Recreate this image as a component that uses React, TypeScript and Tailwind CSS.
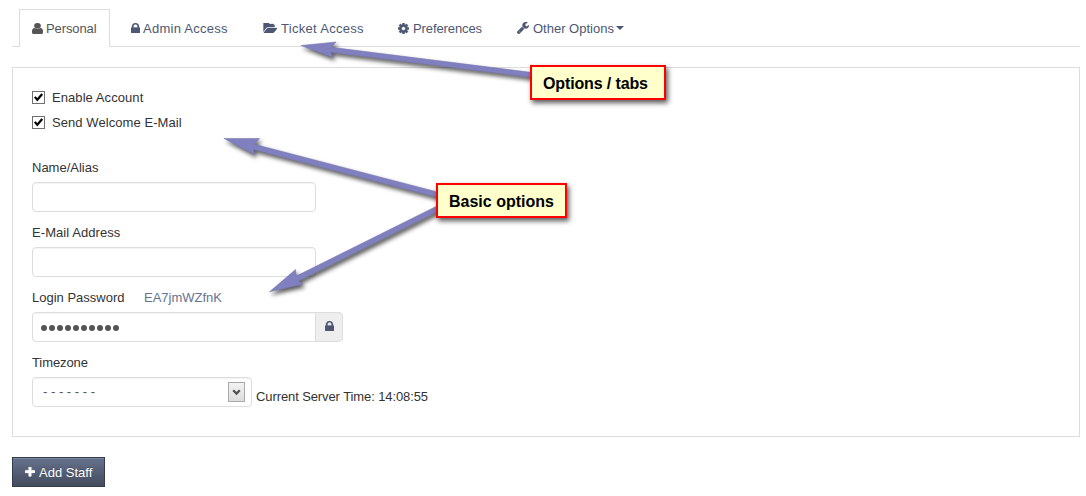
import type { ReactNode } from 'react';

const ICONS = {
  user: 'M1536 1399q0 109-62.5 187t-150.5 78h-854q-88 0-150.5-78t-62.5-187q0-85 8.5-160.5t31.5-152 58.5-131 94-89 134.5-34.5q131 128 313 128t313-128q76 0 134.5 34.5t94 89 58.5 131 31.5 152 8.5 160.5zm-256-887q0 159-112.5 271.5t-271.5 112.5-271.5-112.5-112.5-271.5 112.5-271.5 271.5-112.5 271.5 112.5 112.5 271.5z',
  lock: 'M640 768h512v-192q0-106-75-181t-181-75-181 75-75 181v192zm832 96v576q0 40-28 68t-68 28h-960q-40 0-68-28t-28-68v-576q0-40 28-68t68-28h32v-192q0-184 132-316t316-132 316 132 132 316v192h32q40 0 68 28t28 68z',
  folder: 'M1943 952q0 31-31 66l-336 396q-43 51-120.5 86.5t-143.5 35.5h-1088q-34 0-60.5-13t-26.5-43q0-31 31-66l336-396q43-51 120.5-86.5t143.5-35.5h1088q34 0 60.5 13t26.5 43zm-343-344v160h-832q-94 0-197 47.5t-164 119.5l-337 396-5 6q0-4-.5-12.5t-.5-12.5v-960q0-92 66-158t158-66h320q92 0 158 66t66 158v32h544q92 0 158 66t66 158z',
  cog: 'M1152 896q0-106-75-181t-181-75-181 75-75 181 75 181 181 75 181-75 75-181zm512-109v222q0 12-8 23t-20 13l-185 28q-19 54-39 91 35 50 107 138 10 12 10 25t-9 23q-27 37-99 108t-94 71q-12 0-26-9l-138-108q-44 23-91 38-16 136-29 186-7 28-36 28h-222q-14 0-24.5-8.5t-11.5-21.5l-28-184q-49-16-90-37l-141 107q-10 9-25 9-14 0-25-11-126-114-165-168-7-10-7-23 0-12 8-23 15-21 51-66.5t54-70.5q-27-50-41-99l-183-27q-13-2-21-12.5t-8-23.5v-222q0-12 8-23t19-13l186-28q14-46 39-92-40-57-107-138-10-12-10-24 0-10 9-23 26-36 98.5-107.5t94.5-71.5q13 0 26 10l138 107q44-23 91-38 16-136 29-186 7-28 36-28h222q14 0 24.5 8.5t11.5 21.5l28 184q49 16 90 37l142-107q9-9 24-9 13 0 25 10 129 119 165 170 7 8 7 22 0 12-8 23-15 21-51 66.5t-54 70.5q26 50 41 98l183 28q13 2 21 12.5t8 23.5z',
  wrench: 'M448 1472q0-26-19-45t-45-19-45 19-19 45 19 45 45 19 45-19 19-45zm644-420l-682 682q-37 37-90 37-52 0-91-37l-106-108q-38-36-38-90 0-53 38-91l681-681q39 98 114.5 173.5t173.5 114.5zm634-435q0 39-23 106-47 134-164.5 217.5t-258.5 83.5q-185 0-316.5-131.5t-131.5-316.5 131.5-316.5 316.5-131.5q58 0 121.5 16.5t107.5 46.5q16 11 16 28t-16 28l-293 169v224l193 107q5-3 79-48.5t135.5-81 70.5-35.5q15 0 23.5 10t8.5 25z',
  plus: 'M1600 736v192q0 40-28 68t-68 28h-416v416q0 40-28 68t-68 28h-192q-40 0-68-28t-28-68v-416h-416q-40 0-68-28t-28-68v-192q0-40 28-68t68-28h416v-416q0-40 28-68t68-28h192q40 0 68 28t28 68v416h416q40 0 68 28t28 68z',
};

// Glyph bounds inside each path, so the drawn shape fills its box.
const BOXES: Record<keyof typeof ICONS, string> = {
  user: '256 128 1280 1536',
  lock: '320 128 1152 1408',
  folder: '0 256 1943 1280',
  cog: '128 128 1536 1536',
  wrench: '85 128 1641 1643',
  plus: '192 192 1408 1408',
};

function Icon({ name, className }: { name: keyof typeof ICONS; className: string }) {
  return (
    <svg viewBox={BOXES[name]} fill="currentColor" preserveAspectRatio="none" className={`shrink-0 ${className}`} aria-hidden="true">
      <path d={ICONS[name]} stroke="currentColor" strokeWidth="40" />
    </svg>
  );
}

function Check({ children }: { children: ReactNode }) {
  return (
    <label className="flex h-[25px] items-center gap-[7px] tracking-[0.07px]">
      <span className="flex h-[13px] w-[13px] items-center justify-center border border-[#707070] bg-white">
        <svg viewBox="0 0 11 11" className="h-[11px] w-[11px]">
          <path d="M1.8 4.9 4.3 7.8 9.2 2" fill="none" stroke="#000" strokeWidth="2.2" />
        </svg>
      </span>
      <span>{children}</span>
    </label>
  );
}

function Callout({ className, children }: { className: string; children: ReactNode }) {
  return (
    <div
      className={`absolute flex h-[35px] items-center border-2 border-[#ff0000] bg-[#ffffcc] pt-[2px] pl-[11px] text-[16px] font-bold whitespace-nowrap text-black shadow-[2px_3px_5px_rgba(0,0,0,0.65)] ${className}`}
    >
      {children}
    </div>
  );
}

const inputBox = 'h-[30px] rounded-[4px] border border-[#dddddd] bg-white shadow-[inset_0_1px_1px_rgba(0,0,0,0.05)]';
const labelRow = 'mb-[4px] h-[20px]';
const tab = 'flex h-[35px] items-center pl-[21px]';

export default function App() {
  return (
    <div className="relative h-[496px] w-[1086px] overflow-hidden bg-white pr-[6px] pl-[12px] font-['Liberation_Sans',Arial,sans-serif] text-[13px] leading-[20px] text-[#333333]">
      <nav className="flex h-[47px] items-end border-b border-[#dddddd] pl-[7px] text-[#4c5773]">
        <a className="-mb-px flex h-[38px] w-[91px] items-center border border-b-0 border-[#dddddd] bg-white pl-[12px] tracking-[-0.1px] text-[#555555]">
          <Icon name="user" className="mr-[3px] h-[11px] w-[11px]" />
          Personal
        </a>
        <a className={`w-[132px] tracking-[0.26px] ${tab}`}>
          <Icon name="lock" className="-mt-px mr-[3px] h-[10px] w-[9px]" />
          Admin Access
        </a>
        <a className={`w-[135px] tracking-[0.3px] ${tab}`}>
          <Icon name="folder" className="-mt-px mr-[4px] h-[10px] w-[14px]" />
          Ticket Access
        </a>
        <a className={`w-[119px] tracking-[-0.1px] ${tab}`}>
          <Icon name="cog" className="mr-[4px] h-[11px] w-[11px]" />
          Preferences
        </a>
        <a className={tab}>
          <Icon name="wrench" className="-mt-px mr-[4px] h-[12px] w-[12px]" />
          Other Options
          <svg viewBox="0 0 8 4" className="-mt-px ml-[2px] h-[4px] w-[8px]" fill="currentColor">
            <path d="M0 0h8L4 4z" />
          </svg>
        </a>
      </nav>

      <main className="mt-[20px] h-[370px] border border-[#dddddd] px-[19px] pt-[17px]">
        <Check>Enable Account</Check>
        <Check>Send Welcome E-Mail</Check>

        <div className="mt-[22px] h-[65px] pt-px">
          <div className={labelRow}>Name/Alias</div>
          <div className={`w-[284px] ${inputBox}`} />
        </div>
        <div className="h-[65px] pt-px">
          <div className={`tracking-[0.07px] ${labelRow}`}>E-Mail Address</div>
          <div className={`w-[284px] ${inputBox}`} />
        </div>
        <div className="h-[65px] pt-px">
          <div className={`flex ${labelRow}`}>
            <span className="w-[112px]">Login Password</span>
            <span className="text-[#66738f]">EA7jmWZfnK</span>
          </div>
          <div className="flex">
            <div className={`flex w-[284px] items-center gap-[2px] pt-px pl-[8px] ${inputBox} !rounded-r-none`}>
              {Array.from({ length: 10 }, (_, i) => (
                <span key={i} className="h-[6px] w-[6px] rounded-full bg-[#555555]" />
              ))}
            </div>
            <div className="-ml-px flex h-[30px] w-[28px] items-center justify-center rounded-r-[4px] border border-[#dddddd] bg-[#eeeeee] pb-[2px] pl-px text-[#4c5773]">
              <Icon name="lock" className="h-[10px] w-[9px]" />
            </div>
          </div>
        </div>
        <div className="pt-px">
          <div className={`tracking-[-0.1px] ${labelRow}`}>Timezone</div>
          <div className="flex">
            <div className={`flex w-[220px] items-center justify-between pr-[6px] pl-[10px] text-[#555555] ${inputBox}`}>
              <span>- - - - - - -</span>
              <span className="flex h-[20px] w-[17px] items-center justify-center border border-[#a9a9a9] bg-gradient-to-b from-[#f2f2f2] to-[#dddddd]">
                <svg viewBox="0 0 9 7" className="h-[7px] w-[9px]">
                  <path d="M1.2 1.2 4.5 4.6 7.8 1.2" fill="none" stroke="#505050" strokeWidth="2.2" />
                </svg>
              </span>
            </div>
            <span className="mt-[10px] ml-[4px] tracking-[-0.1px]">Current Server Time: 14:08:55</span>
          </div>
        </div>
      </main>

      <button className="mt-[20px] flex h-[30px] w-[93px] items-center border border-[#343c4e] bg-gradient-to-b from-[#66728d] to-[#434b5e] pt-px pl-[12px] text-white shadow-[inset_0_1px_0_rgba(255,255,255,0.15)] [text-shadow:0_-1px_0_rgba(0,0,0,0.25)]">
        <Icon name="plus" className="-mt-px mr-[4px] h-[10px] w-[10px]" />
        Add Staff
      </button>

      <svg
        viewBox="0 0 1086 496"
        className="pointer-events-none absolute top-0 left-0 h-[496px] w-[1086px] drop-shadow-[2px_3px_2px_rgba(0,0,0,0.65)]"
        fill="#8080c0"
        stroke="#7474ae"
        strokeWidth="0.5"
      >
        <path d="M301 45.5 336 42 331.5 47.3 540 73.5 540 78.5 331 52.3 333 57.5Z" />
        <path d="M224 138.5 259.5 138.5 254.5 144.3 445 194 443.5 199 253.5 149.5 254.5 154.5Z" />
        <path d="M269.5 291.8 295.5 269.5 296.3 276 440 204.5 442.5 209 298.5 281 303 284.3Z" />
      </svg>
      <Callout className="top-[65px] left-[530px] w-[136px] tracking-[-0.13px]">Options / tabs</Callout>
      <Callout className="top-[183px] left-[436px] w-[131px]">Basic options</Callout>
    </div>
  );
}
